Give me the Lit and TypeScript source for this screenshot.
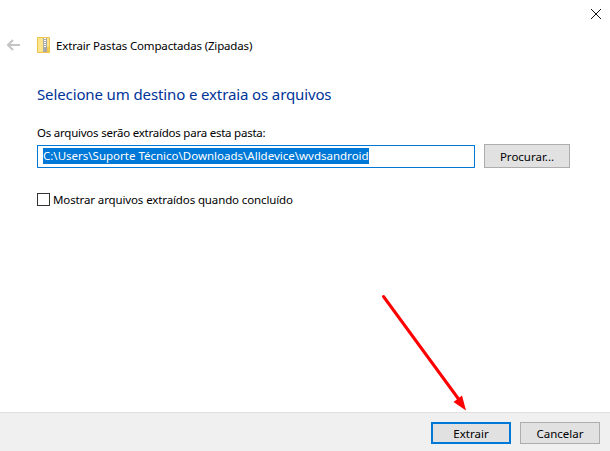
import { LitElement, html, css } from "lit";
import { customElement } from "lit/decorators.js";

@customElement("app-root")
export class AppRoot extends LitElement {
  static styles = css`
    :host { display: block; width: 610px; height: 451px; position: relative; background: #fff; overflow: hidden;
      font-family: "Noto Sans", "Open Sans", sans-serif; font-size: 11.5px; color: #000; }
    .page { display: flex; flex-direction: column; height: 451px; }
    .main { flex: 1; display: flex; flex-direction: column; }
    .close { display: flex; justify-content: flex-end; padding: 9px 9px 0 0; height: 29px; box-sizing: border-box; }
    .close svg { display: block; }
    .nav { display: flex; align-items: center; height: 16px; margin-top: 8px; padding-left: 7px; }
    .nav .back { margin-right: 17px; display: block; }
    .nav .zip { margin-right: 6px; display: block; }
    .title { letter-spacing: -0.16px; }
    .content { padding: 0 40px 0 37px; }
    h1 { margin: 30px 0 0; font-weight: 400; font-size: 15px; letter-spacing: -0.12px; line-height: 22px; color: #003399; }
    .label { margin-top: 20px; line-height: 16px; letter-spacing: -0.23px; }
    .row { display: flex; gap: 9px; margin-top: 3px; align-items: flex-start; }
    .input { width: 438px; height: 23px; box-sizing: border-box; border: 1px solid #0078d7; padding: 2px 0 0 5px; line-height: 16px; white-space: nowrap; margin-top: 1px; }
    .sel { background: #0078d7; color: #fff; display: inline-block; height: 16px; }
    button { font: inherit; color: #000; background: #e1e1e1; border: 1px solid #adadad; padding: 0; margin: 0; box-sizing: border-box; }
    .browse { width: 86px; height: 24px; }
    .check { display: flex; align-items: center; margin-top: 24px; }
    .check span { letter-spacing: -0.12px; }
    .box { width: 13px; height: 13px; box-sizing: border-box; border: 1px solid #333; background: #fff; margin-right: 3px; }
    .footer { height: 39px; box-sizing: border-box; background: #f0f0f0; border-top: 1px solid #dfdfdf; display: flex; justify-content: flex-end; gap: 9px; padding: 9px 10px 0 0; }
    .footer button { width: 80px; height: 22px; }
    .primary { border: 2px solid #0078d7; }
    .arrow { position: absolute; left: 375px; top: 290px; display: block; }
  `;

  render() {
    return html`
      <div class="page">
        <div class="main">
          <div class="close">
            <svg width="10" height="10" viewBox="0 0 10 10"><path d="M0 0L10 10M10 0L0 10" stroke="#111" stroke-width="1" fill="none"/></svg>
          </div>
          <div class="nav">
            <svg class="back" width="13" height="12" viewBox="0 0 13 12"><path d="M6 1L1 6L6 11M1 6H13" stroke="#c4c4c4" stroke-width="2" fill="none"/></svg>
            <svg class="zip" width="13" height="16" viewBox="0 0 13 16">
              <path d="M0.5 0.5H12.5V15.5H0.5Z" fill="#fde58d" stroke="#eec24f"/>
              <rect x="6" y="1" width="4" height="14" fill="#a9a9a9"/>
              <path d="M7 1.5h2M7 3.5h2M7 5.5h2M7 7.5h2M7 9.5h2" stroke="#fff" stroke-width="1"/>
              <rect x="10" y="10" width="3" height="6" fill="#f3c94d"/>
            </svg>
            <span class="title">Extrair Pastas Compactadas (Zipadas)</span>
          </div>
          <div class="content">
            <h1>Selecione um destino e extraia os arquivos</h1>
            <div class="label">Os arquivos serão extraídos para esta pasta:</div>
            <div class="row">
              <div class="input"><span class="sel">C:\\Users\\Suporte Técnico\\Downloads\\Alldevice\\wvdsandroid</span></div>
              <button class="browse">Procurar...</button>
            </div>
            <div class="check"><div class="box"></div><span>Mostrar arquivos extraídos quando concluído</span></div>
          </div>
        </div>
        <div class="footer">
          <button class="primary">Extrair</button>
          <button>Cancelar</button>
        </div>
      </div>
      <svg class="arrow" width="100" height="125" viewBox="375 290 100 125">
        <path d="M383.5 296.5L460 401" stroke="#ff0000" stroke-width="3" stroke-linecap="round" fill="none"/>
        <path d="M466 410.5L453.5 402L462 395.5Z" fill="#ff0000"/>
      </svg>
    `;
  }
}
